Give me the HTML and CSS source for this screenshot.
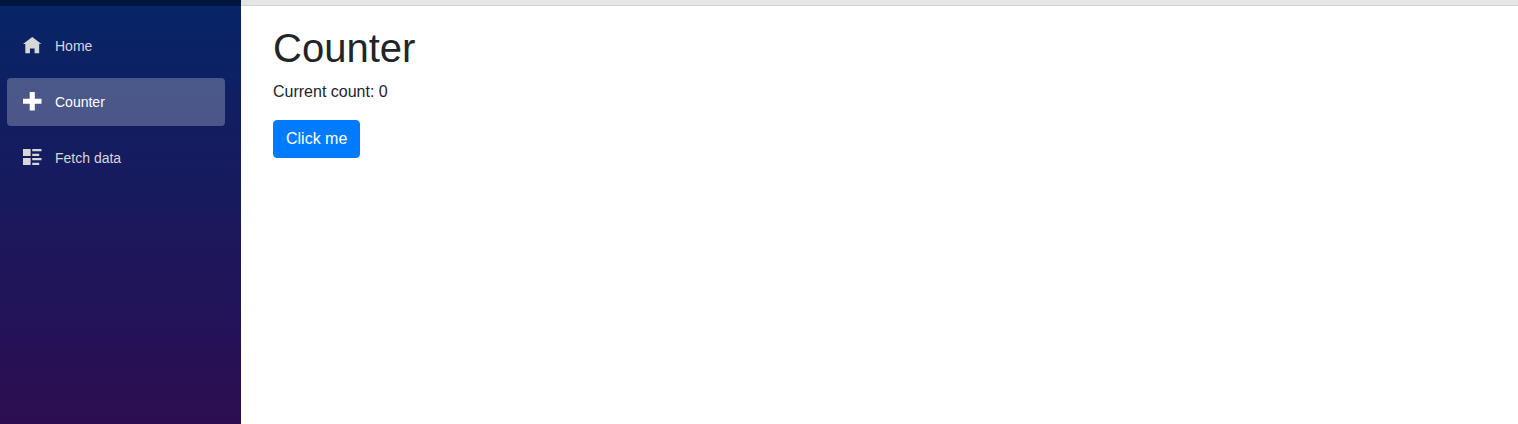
FILE: index.html
```html
<!DOCTYPE html>
<html lang="en">
<head>
<meta charset="utf-8">
<title>Counter</title>
<link rel="stylesheet" href="styles.css">
</head>
<body>
<div class="page">
  <aside class="sidebar">
    <div class="sidebar-top"></div>
    <nav class="nav">
      <a class="nav-link" href="#">
        <svg class="icon" viewBox="0 0 8 8" aria-hidden="true"><path d="M4 0l-4 3h1v4h2v-2h2v2h2v-4.03l1 .03-4-3z"/></svg>
        <span>Home</span>
      </a>
      <a class="nav-link active" href="#">
        <svg class="icon" viewBox="0 .45 8 8" aria-hidden="true"><path d="M2.9 0v2.9h-2.9v2.2h2.9v2.9h2.2v-2.9h2.9v-2.2h-2.9v-2.9h-2.2z"/></svg>
        <span>Counter</span>
      </a>
      <a class="nav-link" href="#">
        <svg class="icon" viewBox="0 0 8 8" aria-hidden="true"><path d="M0 0v3h3.3v-3h-3.3zm4 0v1h4v-1h-4zm0 2v1h3v-1h-3zm-4 1.9v3h3.3v-3h-3.3zm4 0v1h4v-1h-4zm0 2v1h3v-1h-3z"/></svg>
        <span>Fetch data</span>
      </a>
    </nav>
  </aside>
  <main class="main">
    <div class="top-row"></div>
    <div class="content">
      <h1 class="title">Counter</h1>
      <p class="count">Current count: 0</p>
      <button class="btn" type="button">Click me</button>
    </div>
  </main>
</div>
</body>
</html>
```
FILE: styles.css
```css
* { box-sizing: border-box; }
html, body { height: 100%; margin: 0; }
body {
  font-family: "Liberation Sans", Arial, sans-serif;
  font-size: 16px;
  line-height: 1.5;
  color: #212529;
  background: #fff;
}
.page { display: flex; height: 100%; }
.sidebar {
  width: 241px;
  flex: none;
  background-image: linear-gradient(180deg, #062567 0%, #2d0d52 100%);
}
.sidebar-top { height: 6px; background: rgba(0, 0, 0, 0.4); }
.nav { padding: 16px 16px 0 7px; display: flex; flex-direction: column; gap: 8px; }
.nav-link {
  display: flex;
  align-items: center;
  height: 48px;
  padding-left: 16px;
  border-radius: 4px;
  font-size: 14px;
  line-height: 21px;
  color: #d7d7d7;
  text-decoration: none;
}
.nav-link.active { background: rgba(255, 255, 255, 0.25); color: #fff; }
.icon { width: 18.5px; height: 18.5px; margin-right: 13.5px; fill: currentColor; flex: none; overflow: visible; }
.main { flex: 1; min-width: 0; }
.top-row { height: 6px; background: #e5e5e5; border-bottom: 1px solid #d6d5d5; }
.content { padding: 18px 32px 0; }
.title { margin: 0 0 8px; font-size: 40px; font-weight: 500; line-height: 48px; }
.count { margin: 0 0 16px; }
.btn {
  display: block;
  height: 38px;
  padding: 6px 12px;
  border: 1px solid #007bff;
  border-radius: 4px;
  background: #007bff;
  color: #fff;
  font: inherit;
}
```
